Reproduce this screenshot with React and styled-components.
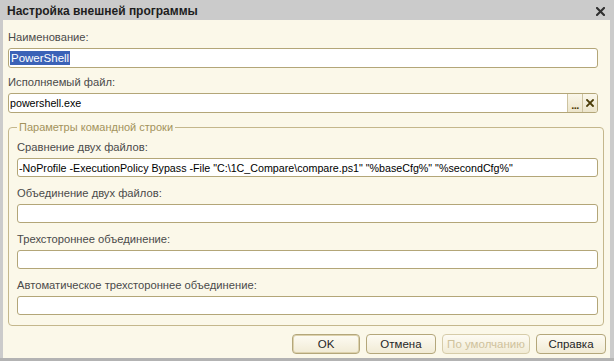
import React from 'react';
import styled, { createGlobalStyle } from 'styled-components';

const Global = createGlobalStyle`
  html, body { margin: 0; padding: 0; background: #ffffff; }
  body { font-family: "Liberation Sans", Arial, sans-serif; font-size: 11px; }
  * { box-sizing: border-box; }
`;

const Window = styled.div`
  width: 614px;
  height: 361px;
  display: flex;
  flex-direction: column;
  background: #cbcbcb;
  border-bottom: 3px solid #b3b3b3;
`;

const TitleBar = styled.div`
  height: 20px;
  flex: none;
  display: flex;
  align-items: center;
  justify-content: space-between;
  padding: 0 9px 0 7px;
  background: #cbcbcb;
`;

const Title = styled.div`
  font-weight: bold;
  font-size: 12px;
  color: #1e1e1e;
  line-height: 14px;
  padding-top: 1px;
`;

const CloseIcon = () => (
  <svg width="9" height="9" viewBox="0 0 9 9" style={{ display: 'block', marginTop: 3 }}>
    <path d="M1 1 L8 8 M8 1 L1 8" stroke="#303030" strokeWidth="2.1" strokeLinecap="square" />
  </svg>
);

const Body = styled.div`
  flex: 1;
  display: flex;
  flex-direction: column;
  margin: 0 4px 0 3px;
  padding: 9px 6px 0 5px;
  background: #fbf8e9;
`;

const Label = styled.div`
  height: 16px;
  line-height: 16px;
  font-size: 11.2px;
  color: #4a4a4a;
  margin-bottom: 3px;
  white-space: nowrap;
`;

const Field = styled.div`
  height: ${p => p.$h || 20}px;
  flex: none;
  display: flex;
  align-items: center;
  margin-right: ${p => p.$inset ? 6 : 0}px;
  margin-bottom: ${p => p.$mb || 0}px;
  padding-left: 1px;
  background: #ffffff;
  border: 1px solid #b3a678;
  border-radius: 3px;
  overflow: hidden;
  color: #000;
  white-space: nowrap;
  font-size: 10.7px;
`;

const FieldText = styled.span`
  flex: 1;
  overflow: hidden;
  line-height: 14px;
`;

const Selected = styled.span`
  background: #3b62b7;
  color: #ffffff;
  line-height: 14px;
  display: inline-block;
  padding: 0 1px;
  font-size: 11.5px;
`;

const FieldButton = styled.div`
  width: 15px;
  height: 100%;
  flex: none;
  display: flex;
  align-items: center;
  justify-content: center;
  border-left: 1px solid #cdc3a0;
  background: linear-gradient(#faf7ea, #ece5cb);
  color: #4a3c08;
  font-weight: bold;
  font-size: 11px;
`;

const Dots = styled.span`
  line-height: 10px;
  padding-top: 4px;
  letter-spacing: -0.5px;
`;

const SmallX = () => (
  <svg width="8" height="8" viewBox="0 0 8 8" style={{ display: 'block' }}>
    <path d="M1 1 L7 7 M7 1 L1 7" stroke="#4a3c08" strokeWidth="1.8" strokeLinecap="square" />
  </svg>
);

const Group = styled.fieldset`
  margin: 7px 0 0 0;
  padding: 5px 5px 10px 8px;
  border: 1px solid #c4b78c;
  border-radius: 4px;
  min-width: 0;
`;

const Legend = styled.legend`
  padding: 0 2px;
  margin-left: 0;
  line-height: 14px;
  font-size: 11px;
  color: #a3935c;
`;

const ButtonRow = styled.div`
  display: flex;
  justify-content: flex-end;
  gap: 6px;
  margin: 8px -2px 0 0;
`;

const Button = styled.div`
  width: ${p => p.$w}px;
  height: 20px;
  display: flex;
  align-items: center;
  justify-content: center;
  border: 1px solid ${p => p.$disabled ? '#d6cca9' : '#b4a77b'};
  border-radius: 4px;
  background: linear-gradient(#fdfbf3, #f1ebd5);
  color: ${p => p.$disabled ? '#cfc29c' : '#262626'};
  box-shadow: ${p => p.$default ? 'inset 0 0 0 1px #ddd2ad' : 'none'};
  line-height: 14px;
  font-size: 11.5px;
`;

const commandLine = '-NoProfile -ExecutionPolicy Bypass -File "C:\\1C_Compare\\compare.ps1" "%baseCfg%" "%secondCfg%"';

export default function App() {
  return (
    <>
      <Global />
      <Window>
        <TitleBar>
          <Title>Настройка внешней программы</Title>
          <CloseIcon />
        </TitleBar>
        <Body>
          <Label>Наименование:</Label>
          <Field $inset $mb={6}>
            <FieldText><Selected>PowerShell</Selected></FieldText>
          </Field>
          <Label>Исполняемый файл:</Label>
          <Field $inset>
            <FieldText>powershell.exe</FieldText>
            <FieldButton><Dots>...</Dots></FieldButton>
            <FieldButton><SmallX /></FieldButton>
          </Field>
          <Group>
            <Legend>Параметры командной строки</Legend>
            <Label>Сравнение двух файлов:</Label>
            <Field $h={19} $mb={8}><FieldText>{commandLine}</FieldText></Field>
            <Label>Объединение двух файлов:</Label>
            <Field $h={19} $mb={8}><FieldText /></Field>
            <Label>Трехстороннее объединение:</Label>
            <Field $h={19} $mb={8}><FieldText /></Field>
            <Label>Автоматическое трехстороннее объединение:</Label>
            <Field $h={19}><FieldText /></Field>
          </Group>
          <ButtonRow>
            <Button $w={68} $default>OK</Button>
            <Button $w={70}>Отмена</Button>
            <Button $w={88} $disabled>По умолчанию</Button>
            <Button $w={70}>Справка</Button>
          </ButtonRow>
        </Body>
      </Window>
    </>
  );
}
